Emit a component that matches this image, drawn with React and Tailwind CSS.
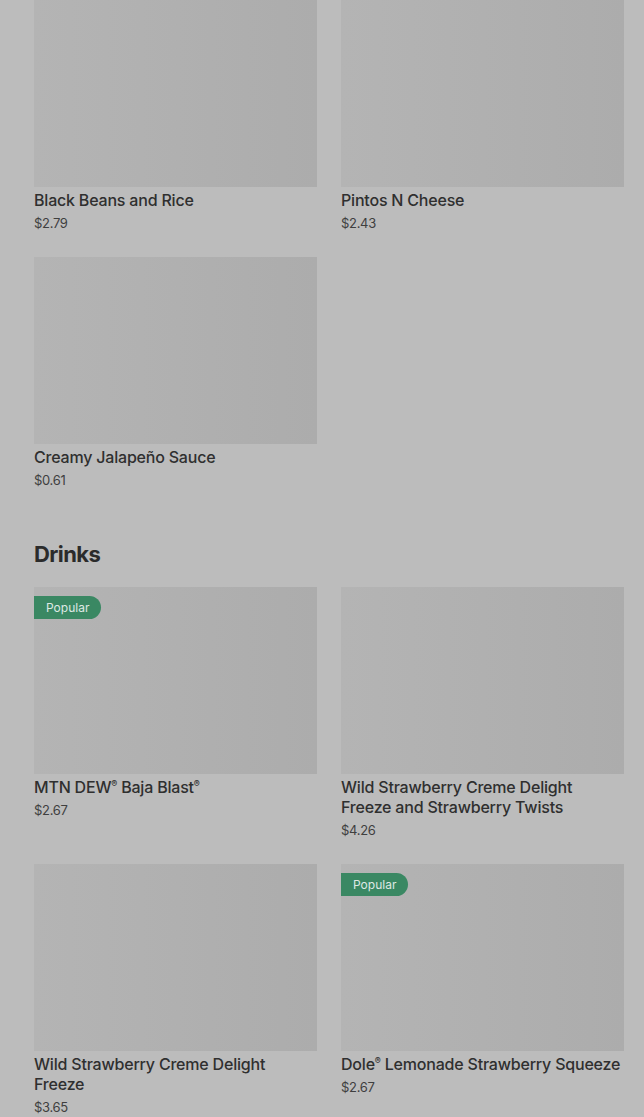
import React from "react";

const sides = [
  { name: "Black Beans and Rice", price: "$2.79" },
  { name: "Pintos N Cheese", price: "$2.43" },
  { name: "Creamy Jalapeño Sauce", price: "$0.61" },
];

const drinks = [
  { name: ["MTN DEW", "®", " Baja Blast", "®"], price: "$2.67", popular: true },
  { name: ["Wild Strawberry Creme Delight Freeze and Strawberry Twists"], price: "$4.26" },
  { name: ["Wild Strawberry Creme Delight Freeze"], price: "$3.65" },
  { name: ["Dole", "®", " Lemonade Strawberry Squeeze"], price: "$2.67", popular: true },
];

function ItemName({ name }) {
  if (typeof name === "string") return name;
  return name.map((part, i) =>
    part === "®" ? (
      <span key={i} className="text-[9px] leading-none align-super">
        ®
      </span>
    ) : (
      <React.Fragment key={i}>{part}</React.Fragment>
    )
  );
}

function ItemCard({ item }) {
  return (
    <div className="flex flex-col">
      <div className="relative h-[187px] w-full bg-gradient-to-r from-[#b4b4b4] to-[#acacac]">
        {item.popular && (
          <span className="absolute left-0 top-[9px] h-[23px] flex items-center pl-3 pr-3 rounded-r-full bg-[#3a8863] text-[12px] text-[#dfe8e3]">
            Popular
          </span>
        )}
      </div>
      <div className="mt-[3px] text-[16px] leading-5 font-medium text-[#2f2f2f] tracking-[-0.2px]">
        <ItemName name={item.name} />
      </div>
      <div className="mt-[3px] text-[13px] leading-5 text-[#3f3f3f] tracking-[-0.3px]">{item.price}</div>
    </div>
  );
}

export default function App() {
  return (
    <div
      className="min-h-[1117px] bg-[#bcbcbc] pl-[34px] pr-[20px] overflow-hidden"
      style={{ fontFamily: "Inter, 'Liberation Sans', sans-serif" }}
    >
      <div className="grid grid-cols-2 gap-x-6 gap-y-6">
        {sides.map((item) => (
          <ItemCard key={item.name} item={item} />
        ))}
      </div>

      <h2 className="mt-[50px] mb-[19px] text-[22px] leading-7 font-bold tracking-[-0.6px] text-[#2b2b2b]">
        Drinks
      </h2>

      <div className="grid grid-cols-2 gap-x-6 gap-y-6">
        {drinks.map((item) => (
          <ItemCard key={item.name.join("")} item={item} />
        ))}
      </div>
    </div>
  );
}
